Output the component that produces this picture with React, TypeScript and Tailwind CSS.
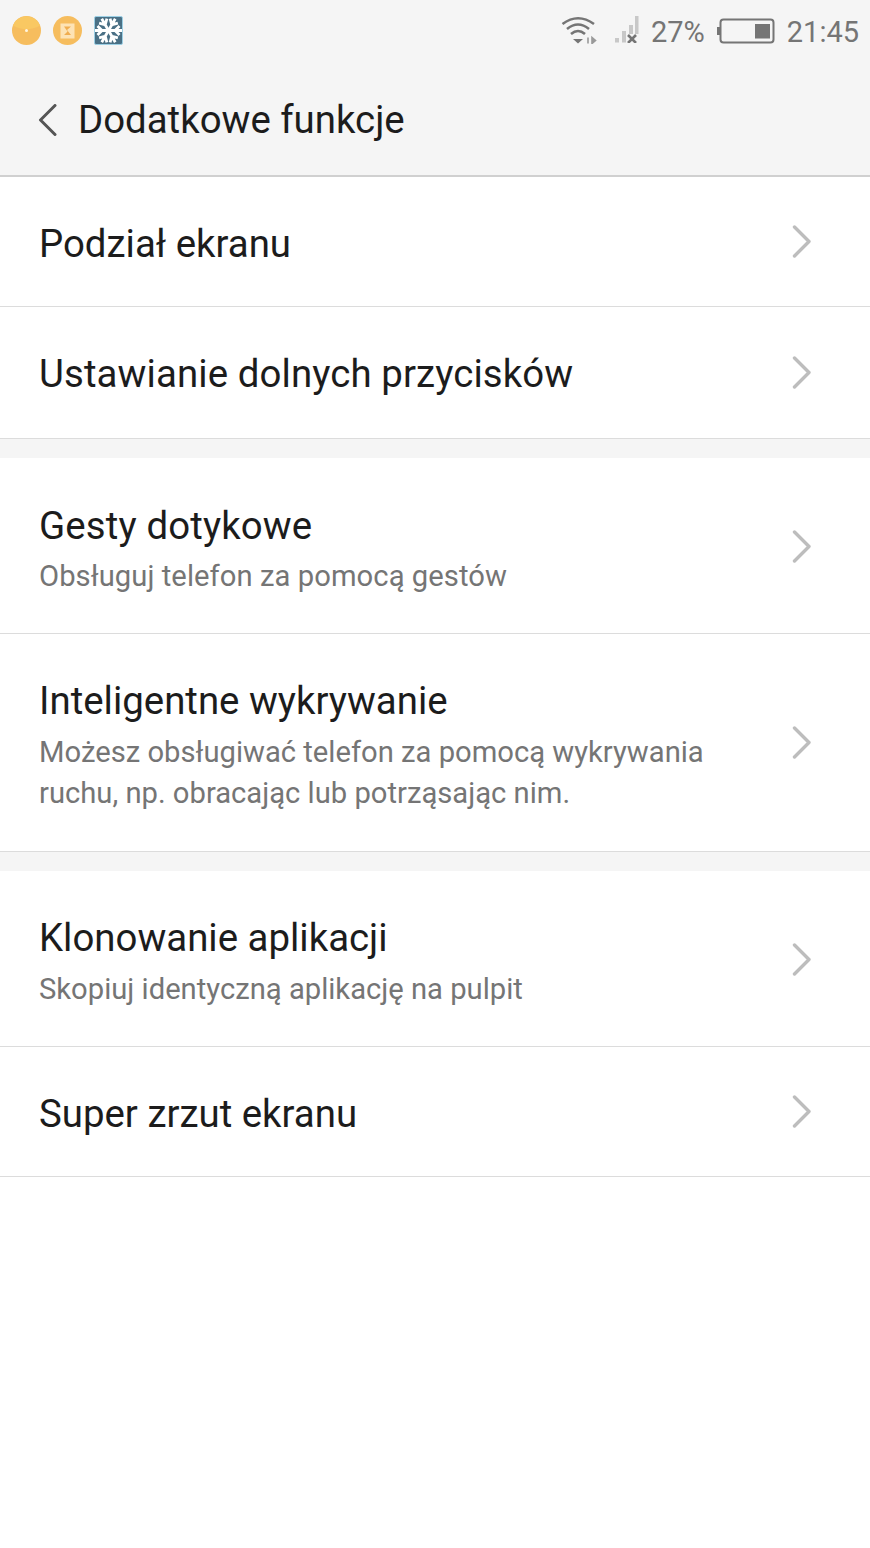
const Chevron = () => (
  <svg width="20" height="34" viewBox="0 0 20 34" fill="none" className="shrink-0">
    <path d="M2.5 2 L17 16.5 L2.5 31" stroke="#bdbdbd" strokeWidth="3.4" strokeLinecap="round" strokeLinejoin="round" />
  </svg>
);

const Row = ({ title, sub, h, pad, chevron = "", titleClass = "", subClass = "mt-[10px]" }: { title: string; sub?: string; h: string; pad: string; chevron?: string; titleClass?: string; subClass?: string }) => (
  <div className={`flex items-center justify-between pl-[39px] pr-[58px] bg-white border-b border-[#dcdcdc] ${h}`}>
    <div className={`w-[700px] ${pad}`}>
      <div className={`text-[38.4px] leading-[42px] text-[#1c1c1c] ${titleClass}`}>{title}</div>
      {sub && <div className={`text-[29.2px] leading-[41px] text-[#757575] ${subClass}`}>{sub}</div>}
    </div>
    <div className={chevron}>
      <Chevron />
    </div>
  </div>
);

const Gap = () => <div className="h-[19px] bg-[#f5f5f5]" />;

const arms = [0, 60, 120, 180, 240, 300];

export default function App() {
  return (
    <div className="w-[870px] h-[1548px] bg-white overflow-hidden font-['Roboto',sans-serif]">
      <div className="h-[177px] bg-[#f5f5f5] border-b-2 border-[#d0d0d0] flex flex-col">
        <div className="h-[60px] flex items-center justify-between pl-[12px] pr-[11px]">
          <div className="flex items-center gap-[12px]">
            <svg width="29" height="29" viewBox="0 0 29 29">
              <circle cx="14.5" cy="14.5" r="14.5" fill="#f6bd5e" />
              <path d="M1 9.5 A14.5 14.5 0 0 1 28 9.5 Q14.5 17 1 9.5Z" fill="#f9c862" />
              <circle cx="14.5" cy="14.5" r="1.5" fill="#fff6e0" />
            </svg>
            <svg width="29" height="29" viewBox="0 0 29 29">
              <circle cx="14.5" cy="14.5" r="14.5" fill="#f6bd5e" />
              <rect x="7.5" y="7.5" width="14" height="15" fill="#fde3b5" />
              <path d="M11 10.5H18L14 14L18 19H11L14.5 15.5Z" fill="#f0ad50" />
            </svg>
            <svg width="29" height="29" viewBox="0 0 29 29">
              <rect x="0.5" y="0.5" width="28" height="28" rx="1.5" fill="#4a7085" stroke="#9ccfe4" />
              <g stroke="#fff" strokeWidth="2.8" fill="none">
                {arms.map((a) => (
                  <g key={a} transform={`rotate(${a + 90} 14.5 14.5)`}>
                    <path d="M14.5 14.5V1M10 3.5L14.5 8L19 3.5" />
                  </g>
                ))}
              </g>
            </svg>
          </div>
          <div className="flex items-center text-[#757575] text-[29px] leading-none">
            <svg width="36" height="28" viewBox="0 0 36 28" fill="none" className="mr-[18px]">
              <path d="M1.5 8 Q17 -3.5 33 8" stroke="#757575" strokeWidth="2.6" />
              <path d="M6 13 Q17 4 28 13" stroke="#757575" strokeWidth="2.6" />
              <path d="M10 18 Q17 12 24 18" stroke="#757575" strokeWidth="2.6" />
              <path d="M12 23H22L17 27.5Z" fill="#757575" />
              <path d="M27 21.5V27.5M31 21.5V27.5L34.5 24.5Z" stroke="#9a9a9a" strokeWidth="1.6" fill="#9a9a9a" />
            </svg>
            <svg width="24" height="28" viewBox="0 0 24 28" className="mr-[12px] -mt-[2px]">
              <rect x="0" y="23" width="4" height="4.5" fill="#c8c8c8" />
              <rect x="7" y="16" width="4" height="11.5" fill="#c8c8c8" />
              <rect x="14" y="10" width="4" height="9" fill="#c8c8c8" />
              <rect x="20" y="1" width="3.5" height="18" fill="#c8c8c8" />
              <path d="M13 20L21 28M21 20L13 28" stroke="#757575" strokeWidth="2.6" />
            </svg>
            <span className="pt-[4px]">27%</span>
            <svg width="58" height="26" viewBox="0 0 58 26" fill="none" className="ml-[12px] mr-[12px] mt-[1px]">
              <rect x="0" y="9" width="3" height="8" fill="#757575" />
              <rect x="3.5" y="1.5" width="53" height="23" rx="3" stroke="#757575" strokeWidth="2" />
              <rect x="38" y="6" width="15" height="14.5" fill="#757575" />
            </svg>
            <span className="pt-[4px]">21:45</span>
          </div>
        </div>
        <div className="flex-1 flex items-center pl-[38px] pt-[4px]">
          <svg width="20" height="32" viewBox="0 0 20 32" fill="none" className="mr-[20px]">
            <path d="M17 1.5L2.5 16L17 30.5" stroke="#555555" strokeWidth="3" strokeLinecap="round" strokeLinejoin="round" />
          </svg>
          <span className="text-[38.4px] leading-[42px] text-[#1c1c1c]">Dodatkowe funkcje</span>
        </div>
      </div>
      <Row h="h-[130px]" pad="pt-[5px]" title="Podział ekranu" />
      <Row h="h-[132px]" pad="pt-[3px]" titleClass="tracking-[0.1px]" title="Ustawianie dolnych przycisków" />
      <Gap />
      <Row h="h-[176px]" pad="pt-[10px]" chevron="pt-[2px]" titleClass="tracking-[0.14px]" subClass="mt-[9px] tracking-[0.06px]" title="Gesty dotykowe" sub="Obsługuj telefon za pomocą gestów" />
      <Row h="h-[218px]" pad="pt-[8px]" title="Inteligentne wykrywanie" sub="Możesz obsługiwać telefon za pomocą wykrywania ruchu, np. obracając lub potrząsając nim." />
      <Gap />
      <Row h="h-[176px]" pad="pt-[10px]" chevron="pt-[2px]" title="Klonowanie aplikacji" sub="Skopiuj identyczną aplikację na pulpit" />
      <Row h="h-[130px]" pad="pt-[5px]" title="Super zrzut ekranu" />
    </div>
  );
}
